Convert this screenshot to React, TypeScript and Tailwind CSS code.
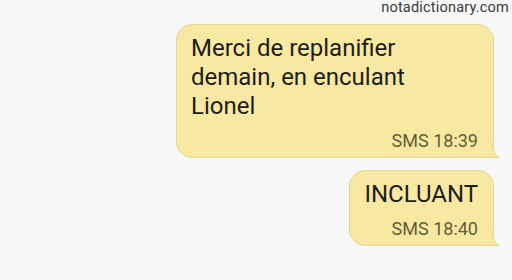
import React from "react";

function Tail() {
  return (
    <svg
      className="absolute right-[-8px] bottom-[-1px]"
      width="10"
      height="16"
      viewBox="0 0 10 16"
    >
      <path d="M0 0 C0 8 3 13 8.5 15.5 L0 15.5 Z" fill="#f8e9a2" />
      <path d="M1 0 C1 8 3.5 13 8.5 15.5 L0 15.5" fill="none" stroke="#e5d691" strokeWidth="1" />
    </svg>
  );
}

function Bubble({ children, time }: { children: React.ReactNode; time: string }) {
  return (
    <div className="relative rounded-[16px] rounded-br-none border border-[#e5d691] bg-[#f8e9a2] pl-[14px] pr-[15px] pt-[9px] pb-[5px]">
      <div className="text-[24px] leading-[29px] text-[#1d1d1b]">{children}</div>
      <div className="text-right text-[18px] leading-[22px] text-[#645d36] mt-[9px]">{time}</div>
      <Tail />
    </div>
  );
}

export default function App() {
  return (
    <div
      className="w-[512px] h-[280px] bg-[#f7f7f7] flex flex-col items-end pr-[18px] overflow-hidden"
      style={{ fontFamily: "Roboto, 'Noto Sans', sans-serif" }}
    >
      <div className="w-full flex justify-end mr-[-15px] text-[14.5px] leading-[16px] text-[#3a3a3a] tracking-[0.2px]">
        notadictionary.com
      </div>
      <div className="mt-[8px] w-[318px]">
        <Bubble time="SMS 18:39">
          Merci de replanifier
          <br />
          demain, en enculant
          <br />
          Lionel
        </Bubble>
      </div>
      <div className="mt-[12px]">
        <Bubble time="SMS 18:40">INCLUANT</Bubble>
      </div>
    </div>
  );
}
